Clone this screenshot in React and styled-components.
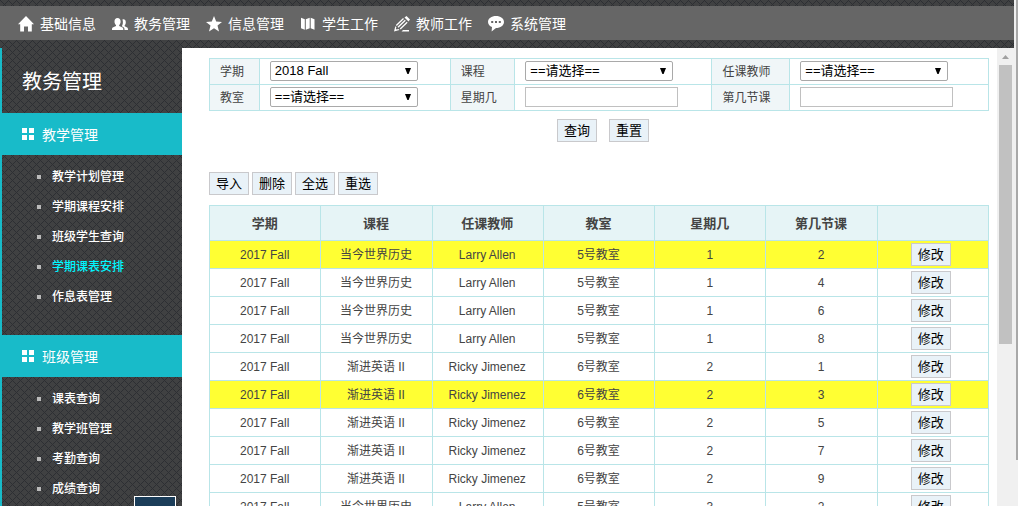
import React, {useState} from "react";
import styled, {createGlobalStyle} from "styled-components";

const sans = `"Liberation Sans", "Noto Sans CJK SC", sans-serif`
const line = '#b9e5e8'

// 8px tile, dots laid along both diagonals
const weave = `url("data:image/svg+xml,${encodeURIComponent(
    `<svg xmlns="http://www.w3.org/2000/svg" width="8" height="8" shape-rendering="crispEdges"><rect width="8" height="8" fill="#404142"/><path fill="#2d2f33" d="${
        [0, 1, 2, 3, 4, 5, 6, 7].map(i => `M${i} ${i}h1v1h-1zM${(8 - i) % 8} ${i}h1v1h-1z`).join('')
    }"/></svg>`)}")`

const GlobalStyle = createGlobalStyle`
  * {
    box-sizing: border-box;
  }
  body {
    margin: 0;
    font: 12px/18px ${sans};
    color: #444;
  }
  button, input, select {
    font-family: inherit;
  }
`
const Page = styled.div`
  display: flex;
  height: 100vh;
  overflow: hidden;
  background: #f0f0f0;
`
const Frame = styled.div`
  flex: 1;
  min-width: 0;
  display: flex;
  flex-direction: column;
  background: ${weave};
`
const TopNav = styled.nav`
  display: flex;
  flex: none;
  gap: 16px;
  height: 34px;
  margin: 6px 0 8px;
  padding: 2px 0 0 18px;
  background: #666;
`
const TopLink = styled.a`
  display: flex;
  align-items: center;
  gap: 6px;
  color: #fff;
  font-size: 14px;
  text-decoration: none;
  white-space: nowrap;

  svg {
    width: 16px;
    height: 16px;
    fill: currentColor;
  }
`
const Columns = styled.div`
  flex: 1;
  min-height: 0;
  display: flex;
`
const Sidebar = styled.aside`
  position: relative;
  flex: none;
  width: 182px;
  overflow: hidden;
  border-left: 2px solid #18bbc9;
  color: #fff;
`
const SideTitle = styled.h1`
  margin: 0;
  padding: 3px 0 0 20px;
  font-size: 20px;
  font-weight: normal;
  line-height: 62px;
`
const GroupTitle = styled.h2`
  display: flex;
  align-items: center;
  gap: 8px;
  height: 42px;
  margin: 0;
  padding: 2px 0 0 20px;
  background: #18bbc9;
  font-size: 14px;
  font-weight: normal;

  svg {
    width: 12px;
    height: 12px;
    margin-bottom: 2px;
    fill: currentColor;
  }
`
const SubMenu = styled.ul`
  list-style: none;
  margin: 0;
  padding: 7px 0 23px 35px;
`
const SubItem = styled.li`
  display: flex;
  align-items: center;
  gap: 11px;
  height: 30px;

  &::before {
    content: '';
    width: 4px;
    height: 4px;
    background: #bbb;
  }
`
const SubLink = styled.a`
  color: ${props => props.$active ? '#00f6ff' : '#fff'};
  font-weight: 500;
  text-decoration: none;
`
const StatusBox = styled.div`
  position: absolute;
  right: 6px;
  bottom: 0;
  width: 42px;
  height: 10px;
  border: 1px solid #fff;
  border-bottom: 0;
  background: #1b3d59;
`
const Content = styled.main`
  flex: 1;
  min-width: 0;
  overflow: hidden;
  padding: 10px 8px 0 27px;
  background: #fff;
`
const FilterTable = styled.table`
  width: 100%;
  table-layout: fixed;
  border-collapse: collapse;

  th, td {
    height: 26px;
    padding: 2px 10px 3px;
    border: 1px solid ${line};
    text-align: left;
    vertical-align: top;
  }
  th {
    padding: 4px 10px 3px;
    background: #f0f6f8;
    font-weight: normal;
  }
`
const Select = styled.select`
  display: block;
  appearance: none;
  width: 148px;
  height: 20px;
  padding: 0 4px;
  border: 1px solid #a9a9a9;
  border-radius: 2px;
  background: #fff url("data:image/svg+xml,${encodeURIComponent('<svg xmlns="http://www.w3.org/2000/svg" width="6" height="6"><path d="M0 0h6L3.6 6H2.4z"/></svg>')}") no-repeat right 6px center;
  color: #000;
  font-size: 13px;
  line-height: 18px;
`
const TextInput = styled.input`
  display: block;
  width: 153px;
  height: 20px;
  padding: 0 4px;
  border: 1px solid #c0c0c0;
  font-size: 13px;
`
const Button = styled.button`
  height: 23px;
  padding: 0 6px;
  border: 1px solid #c9c9cc;
  background: #e9f2f8;
  color: #000;
  font-size: 13px;
  line-height: 20px;
`
const Actions = styled.div`
  display: flex;
  gap: 3px;
  margin-bottom: 10px;
`
const SearchActions = styled(Actions)`
  justify-content: center;
  gap: 12px;
  margin: 8px 0 30px;
  padding-left: 8px;
`
const DataTable = styled.table`
  width: 100%;
  table-layout: fixed;
  border-collapse: collapse;
  text-align: center;

  th, td {
    height: 28px;
    padding: 0 1px 0 0;
    border: 1px solid ${line};
  }
  th {
    height: 35px;
    padding-top: 2px;
    background: #e6f4f6;
    font-size: 13px;
  }
  td:last-child {
    padding-right: 4px;
  }
`
const Row = styled.tr`
  background: ${props => props.$marked ? '#ff3' : '#fff'};
`
const InnerScroll = styled.div`
  display: flex;
  flex-direction: column;
  align-items: center;
  flex: none;
  width: 17px;
  background: #f0f0f0;

  svg {
    flex: none;
    width: 7px;
    height: 17px;
    fill: #a0a0a0;
  }
`
const InnerThumb = styled.div`
  flex: none;
  width: 13px;
  height: 61%;
  background: #c1c1c1;
`
const OuterScroll = styled.div`
  flex: none;
  width: 4px;
  padding-left: 2px;
`
const OuterThumb = styled.div`
  height: 91%;
  background: #a8a8a8;
`

const topLinks = [
    ['基础信息', <path d="M8 0 0 8.2h2.2V15.500h3.800V10.500h4v5h3.800V8.200H16z"/>],
    ['教务管理', <path d="M5.500 2c2 0 3.100 1.400 3.100 3.500 0 1.600-.6 2.900-1.400 3.500v.9l3.300 1.700c.6.300.8.8.8 2.400H0c0-1.600.2-2.100.8-2.400L4 9.900V9c-.9-.6-1.500-1.900-1.500-3.500C2.500 3.400 3.600 2 5.500 2zM10.500 3.500c.3-.2.600-.2.900-.2 1.500 0 2.400 1.200 2.400 3 0 1.300-.4 2.300-1.100 2.900v1l2.400 1.400c.7.400.9.900.9 2.400h-3.500c0-1.900-.3-2.500-1.300-3l-1.400-.8c.9-1.200 1.600-3.600.7-6.700z"/>],
    ['信息管理', <path d="m8 0 2.200 5.500 5.800.4-4.500 3.700L13 15.500l-5-3.200-5 3.200 1.500-5.900L0 5.900l5.800-.4z"/>],
    ['学生工作', <path d="M1 1.800 4.800 3.200v10.500L1 12.300zM5.800 3.200l3.900-1.400v10.500l-3.900 1.400zM10.700 1.800l3.800 1.400v10.500l-3.800-1.400z"/>],
    ['教师工作', <><path d="M10.500 1.500 12.500 0 16 3.500l-1.500 2z"/><path fill="none" stroke="currentColor" strokeWidth="1.300" d="M9.500 2.500 2.300 9.500M11.300 4.200 4 11.300M13.200 6.200 6.200 13"/><path d="M1.300 10.200 0 15.500l5.500-1.600-1-1-2 .5-.6-.6.500-1.700zM9 14h6v1.500H7.500z"/></>],
    ['系统管理', <path fillRule="evenodd" d="M8 0c4.500 0 8 2.500 8 5.900 0 3.400-3.500 6-8 6L3.600 15.500 4 11C1.600 10 0 8.100 0 5.900 0 2.500 3.500 0 8 0zM3.200 5v2h2V5zm3.800 0v2h2V5zm3.800 0v2h2V5z"/>],
]

const groups = [
    {title: '教学管理', items: ['教学计划管理', '学期课程安排', '班级学生查询', '学期课表安排', '作息表管理']},
    {title: '班级管理', items: ['课表查询', '教学班管理', '考勤查询', '成绩查询']},
]

const ask = '==请选择=='
const filters = [
    [['学期', '2018 Fall'], ['课程', ask], ['任课教师', ask]],
    [['教室', ask], ['星期几'], ['第几节课']],
]

const history = ['2017 Fall', '当今世界历史', 'Larry Allen', '5号教室', 1]
const english = ['2017 Fall', '渐进英语 II', 'Ricky Jimenez', '6号教室', 2]
const lessons = [
    [...history, 2], [...history, 4], [...history, 6], [...history, 8],
    [...english, 1], [...english, 3], [...english, 5], [...english, 7], [...english, 9],
    ['2017 Fall', '当今世界历史', 'Larry Allen', '5号教室', 3, 2],
]

const FilterCol = styled.col`
  width: ${props => props.$share}%;
`

const Filter = ({label, value}) => (
    <>
        <th scope="row"><label htmlFor={label}>{label}</label></th>
        <td>
            {value
                ? <Select id={label} defaultValue={value}><option>{value}</option></Select>
                : <TextInput id={label} type="text"/>}
        </td>
    </>
)

const App = () => {
    const [active, setActive] = useState('学期课表安排')

    return (
        <Page>
            <GlobalStyle/>
            <Frame>
                <TopNav>
                    {topLinks.map(([label, icon]) => (
                        <TopLink key={label} href="#"><svg viewBox="0 0 16 16" aria-hidden="true">{icon}</svg>{label}</TopLink>
                    ))}
                </TopNav>
                <Columns>
                    <Sidebar>
                        <SideTitle>教务管理</SideTitle>
                        {groups.map(group => (
                            <section key={group.title}>
                                <GroupTitle>
                                    <svg viewBox="0 0 12 12" aria-hidden="true"><path d="M0 0h5v5H0zM7 0h5v5H7zM0 7h5v5H0zM7 7h5v5H7z"/></svg>
                                    {group.title}
                                </GroupTitle>
                                <SubMenu>
                                    {group.items.map(item => (
                                        <SubItem key={item}>
                                            <SubLink href="#" $active={item === active} onClick={() => setActive(item)}>{item}</SubLink>
                                        </SubItem>
                                    ))}
                                </SubMenu>
                            </section>
                        ))}
                        <StatusBox/>
                    </Sidebar>
                    <Content>
                        <FilterTable>
                            <colgroup>
                                {[6.4, 24.5, 8.3, 25.3, 10, 25.5].map((share, i) => <FilterCol key={i} $share={share}/>)}
                            </colgroup>
                            <tbody>
                                {filters.map((row, i) => (
                                    <tr key={i}>
                                        {row.map(([label, value]) => <Filter key={label} label={label} value={value}/>)}
                                    </tr>
                                ))}
                            </tbody>
                        </FilterTable>
                        <SearchActions>
                            <Button>查询</Button>
                            <Button>重置</Button>
                        </SearchActions>
                        <Actions>
                            {['导入', '删除', '全选', '重选'].map(label => <Button key={label}>{label}</Button>)}
                        </Actions>
                        <DataTable>
                            <thead>
                                <tr>
                                    {['学期', '课程', '任课教师', '教室', '星期几', '第几节课', ''].map(head => <th key={head}>{head}</th>)}
                                </tr>
                            </thead>
                            <tbody>
                                {lessons.map((lesson, i) => (
                                    <Row key={i} $marked={i === 0 || i === 5}>
                                        {lesson.map((cell, j) => <td key={j}>{cell}</td>)}
                                        <td><Button>修改</Button></td>
                                    </Row>
                                ))}
                            </tbody>
                        </DataTable>
                    </Content>
                    <InnerScroll>
                        <svg viewBox="0 0 7 17" aria-hidden="true"><path d="M0 11h7L3.500 7z"/></svg>
                        <InnerThumb/>
                    </InnerScroll>
                </Columns>
            </Frame>
            <OuterScroll><OuterThumb/></OuterScroll>
        </Page>
    )
}

export default App
